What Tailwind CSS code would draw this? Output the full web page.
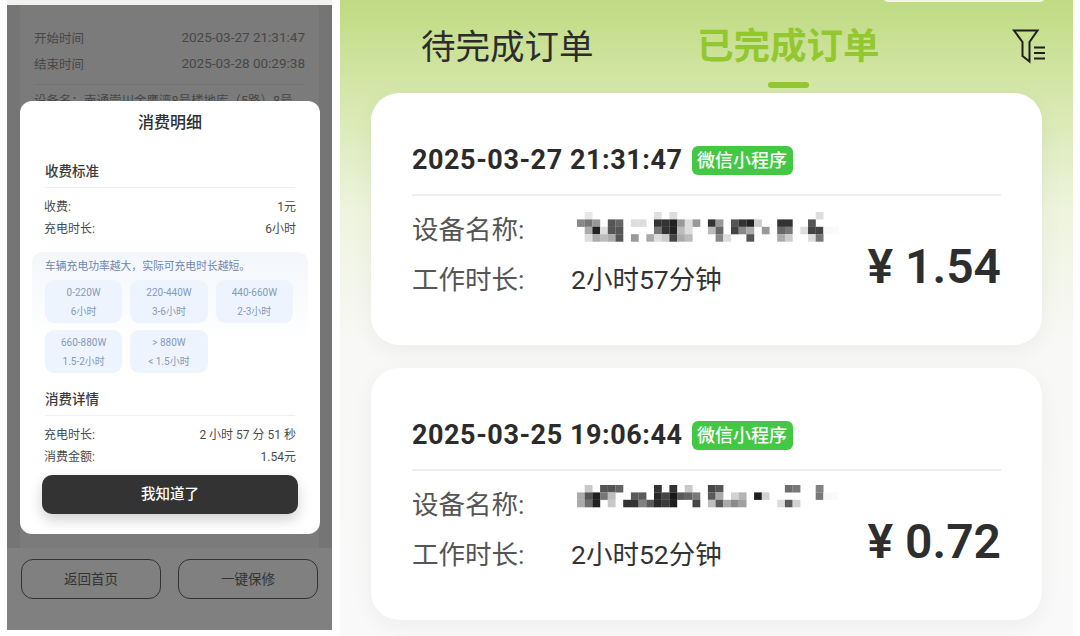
<!DOCTYPE html>
<html lang="zh-CN">
<head>
    <meta charset="UTF-8">
    <meta name="viewport" content="width=device-width, initial-scale=1.0">
    <title>订单</title>
    <script src="https://cdn.jsdelivr.net/npm/@tailwindcss/browser@4"></script>
</head>
<body class="w-[1080px] h-[636px] overflow-hidden bg-white flex font-['Roboto','Noto_Sans_CJK_SC',sans-serif]">

<!-- Left phone: order detail with modal -->
<div class="w-[340px] h-[636px] shrink-0 pl-[7px] pr-[8px]">
    <div class="h-[5px] bg-[#f1f1ef]"></div>
    <div class="relative h-[625px] bg-[#757575] flex flex-col overflow-hidden">
        <div class="mx-[13px] h-[543px] bg-[#7b7b7b] px-[14px] pt-[21px] text-[12.5px] text-[#474747]">
            <div class="flex justify-between items-center h-[26px]"><span>开始时间</span><span class="text-[13.5px] -mt-[4px]">2025-03-27 21:31:47</span></div>
            <div class="flex justify-between items-center h-[26px]"><span>结束时间</span><span class="text-[13.5px] -mt-[4px]">2025-03-28 00:29:38</span></div>
            <div class="border-t border-[#737373] mt-[6px] pt-[7px] whitespace-nowrap">设备名：南通崇川金鹰湾8号楼地库（5路）8号</div>
        </div>
        <div class="flex-1 bg-[#808080] px-[14px] pt-[11px] flex gap-[17px]">
            <div class="w-[140px] h-[40px] rounded-[12px] border border-[#333] flex items-center justify-center text-[13.5px] text-[#333]">返回首页</div>
            <div class="w-[140px] h-[40px] rounded-[12px] border border-[#333] flex items-center justify-center text-[13.5px] text-[#333]">一键保修</div>
        </div>

        <!-- Modal -->
        <div class="absolute left-[13px] top-[96px] w-[300px] h-[433px] bg-white rounded-[12px] flex flex-col text-[12px] text-[#4a4a4a]">
            <div class="h-[33px] flex items-end justify-center text-[16px] font-medium text-[#2f2f2f] leading-[22px]">消费明细</div>
            <div class="mx-[25px] mt-[20px] h-[34px] pt-[2px] flex items-center text-[13.5px] font-medium text-[#3a3a3a] border-b border-[#f0f0f0]">收费标准</div>
            <div class="mx-[24px] mt-[7px] pt-[2px] flex justify-between items-center h-[22px]"><span>收费:</span><span>1元</span></div>
            <div class="mx-[24px] pt-[2px] flex justify-between items-center h-[22px]"><span>充电时长:</span><span>6小时</span></div>

            <div class="mx-[12px] mt-[13px] pt-[7px] h-[88px] rounded-t-[10px] bg-[linear-gradient(to_bottom,#f3f6fb,#ffffff)]">
                <div class="ml-[13px] text-[10.8px] leading-[16px] text-[#6c88ad]">车辆充电功率越大，实际可充电时长越短。</div>
            </div>
            <div class="-mt-[60px] mx-[25px] grid grid-cols-3 gap-x-[8px] gap-y-[7px] w-[248px] text-[10px] leading-[19px] text-[#8599b8] text-center">
                <div class="h-[43px] rounded-[9px] bg-[#eef4fe] pt-[3px]">0-220W<br>6小时</div>
                <div class="h-[43px] rounded-[9px] bg-[#eef4fe] pt-[3px]">220-440W<br>3-6小时</div>
                <div class="h-[43px] rounded-[9px] bg-[#eef4fe] pt-[3px]">440-660W<br>2-3小时</div>
                <div class="h-[43px] rounded-[9px] bg-[#eef4fe] pt-[3px]">660-880W<br>1.5-2小时</div>
                <div class="h-[43px] rounded-[9px] bg-[#eef4fe] pt-[3px]">&gt; 880W<br>&lt; 1.5小时</div>
            </div>

            <div class="mx-[25px] mt-[9px] h-[34px] pt-[2px] flex items-center text-[13.5px] font-medium text-[#3a3a3a] border-b border-[#f0f0f0]">消费详情</div>
            <div class="mx-[24px] mt-[7px] pt-[2px] flex justify-between items-center h-[22px]"><span>充电时长:</span><span>2 小时 57 分 51 秒</span></div>
            <div class="mx-[24px] pt-[2px] flex justify-between items-center h-[22px]"><span>消费金额:</span><span>1.54元</span></div>
            <div class="mx-[22px] mt-[8px] h-[39px] rounded-[10px] bg-[#333333] text-white text-[14.5px] font-medium flex items-center justify-center shadow-[0_6px_14px_rgba(0,0,0,0.18)]">我知道了</div>
        </div>
    </div>
</div>

<!-- Right phone: order list -->
<div class="w-[733px] h-[636px] shrink-0 relative overflow-hidden bg-[linear-gradient(to_bottom,#bfdb82_0px,#d9e9b2_110px,#eef4de_210px,#f8f8f6_340px,#f9f9f9_636px)]">
    <div class="absolute left-[543px] -top-[8px] w-[162px] h-[10px] rounded-full bg-[#f4f6ea]"></div>

    <div class="h-[93px] relative pl-[81px] pt-[22px] flex items-start">
        <span class="w-[276px] text-[34.5px] leading-[50px] text-[#2c2c2c]">待完成订单</span>
        <span class="text-[36.5px] leading-[50px] font-bold text-[#93c72e]">已完成订单</span>
        <span class="absolute left-[428px] top-[82px] w-[41px] h-[6px] rounded-full bg-[#93c72e]"></span>
        <svg class="absolute left-[672px] top-[28px]" width="36" height="36" viewBox="0 0 36 36" fill="none" stroke="#1f1f1f" stroke-width="2">
            <path d="M2 2.5H25.5L17.5 14V33.5L10.5 28V14Z" stroke-linejoin="miter"/>
            <path d="M22 19.5H33M22 25H33M22 30.5H33"/>
        </svg>
    </div>

    <div class="mx-[31px] flex flex-col gap-[23px]">
        <div class="h-[252px] bg-white rounded-[28px] px-[41px] shadow-[0_6px_22px_rgba(0,0,0,0.05)]">
            <div class="h-[103px] flex items-center gap-[9px] border-b-2 border-[#eeeeee] pt-[38px] pb-[4px]">
                <span class="text-[27px] font-bold text-[#2b2b2b] leading-none tracking-[0.55px]">2025-03-27 21:31:47</span>
                <span class="w-[101px] h-[29px] rounded-[6px] bg-[#44c744] text-white text-[18px] font-medium leading-[29px] text-center">微信小程序</span>
            </div>
            <div class="relative pt-[9px]">
                <div class="flex items-center h-[50px] text-[26.5px] text-[#555555]">
                    <span class="w-[165px]">设备名称:</span>
                    <svg data-mosaic="a" width="290" height="36"></svg>
                </div>
                <div class="flex items-center h-[50px] text-[#555555] text-[26.5px]">
                    <span class="w-[159px]">工作时长:</span>
                    <span class="text-[#333333]">2小时57分钟</span>
                </div>
                <div class="absolute right-0 top-[41px] text-[48px] leading-[60px] font-semibold text-[#2e2e2e]">¥ 1.54</div>
            </div>
        </div>

        <div class="h-[252px] bg-white rounded-[28px] px-[41px] shadow-[0_6px_22px_rgba(0,0,0,0.05)]">
            <div class="h-[103px] flex items-center gap-[9px] border-b-2 border-[#eeeeee] pt-[38px] pb-[4px]">
                <span class="text-[27px] font-bold text-[#2b2b2b] leading-none tracking-[0.55px]">2025-03-25 19:06:44</span>
                <span class="w-[101px] h-[29px] rounded-[6px] bg-[#44c744] text-white text-[18px] font-medium leading-[29px] text-center">微信小程序</span>
            </div>
            <div class="relative pt-[9px]">
                <div class="flex items-center h-[50px] text-[26.5px] text-[#555555]">
                    <span class="w-[165px]">设备名称:</span>
                    <svg data-mosaic="b" width="290" height="36" class="-mt-[4px]"></svg>
                </div>
                <div class="flex items-center h-[50px] text-[#555555] text-[26.5px]">
                    <span class="w-[159px]">工作时长:</span>
                    <span class="text-[#333333]">2小时52分钟</span>
                </div>
                <div class="absolute right-0 top-[41px] text-[48px] leading-[60px] font-semibold text-[#2e2e2e]">¥ 0.72</div>
            </div>
        </div>
    </div>
</div>

<script>
    // Blurred device names: [column, row, grey]
    const mosaics = {
        a: [[1,0,232],[10,0,224],[12,0,221],[31,0,221],
            [0,1,136],[1,1,119],[2,1,153],[4,1,85],[5,1,102],[7,1,221],[8,1,221],[10,1,51],[11,1,51],[12,1,34],[13,1,153],[14,1,221],[15,1,153],[17,1,51],[18,1,153],[20,1,85],[21,1,51],[22,1,34],[23,1,204],[26,1,51],[27,1,51],[30,1,85],
            [1,2,170],[2,2,34],[3,2,221],[4,2,85],[5,2,85],[10,2,119],[11,2,51],[12,2,34],[13,2,187],[14,2,221],[17,2,187],[18,2,102],[20,2,68],[21,2,136],[22,2,170],[24,2,153],[26,2,102],[27,2,119],[29,2,221],[30,2,68],[31,2,68],[32,2,248],[33,2,250],
            [1,3,221],[2,3,170],[3,3,187],[4,3,170],[5,3,85],[7,3,153],[9,3,170],[10,3,221],[11,3,204],[12,3,68],[13,3,170],[14,3,187],[18,3,136],[19,3,221],[22,3,85],[26,3,170],[27,3,204],[30,3,221],[31,3,119]],
        b: [[1,0,200],[3,0,85],[4,0,85],[5,0,100],[10,0,51],[12,0,51],[14,0,200],[17,0,70],[18,0,85],[27,0,110],[28,0,120],[31,0,130],
            [0,1,170],[1,1,85],[2,1,34],[3,1,119],[4,1,190],[7,1,90],[8,1,90],[10,1,40],[11,1,70],[12,1,25],[13,1,90],[14,1,100],[15,1,120],[17,1,90],[18,1,170],[20,1,210],[21,1,180],[23,1,30],[24,1,210],[31,1,120],[32,1,248],[33,1,250],
            [0,2,170],[1,2,110],[2,2,34],[4,2,200],[6,2,50],[7,2,50],[8,2,130],[9,2,90],[10,2,40],[11,2,60],[12,2,30],[15,2,70],[17,2,190],[18,2,90],[19,2,170],[20,2,140],[21,2,160],[26,2,220],[27,2,90],[28,2,210]]
    };

    document.querySelectorAll('[data-mosaic]').forEach(svg => {
        const cells = mosaics[svg.dataset.mosaic];
        svg.innerHTML = cells.map(([c, r, g]) =>
            `<rect x="${(c * 7.7).toFixed(1)}" y="${(r * 7.4).toFixed(1)}" width="7.8" height="7.5" fill="rgb(${g},${g},${g})"/>`
        ).join('');
    });
</script>
</body>
</html>
